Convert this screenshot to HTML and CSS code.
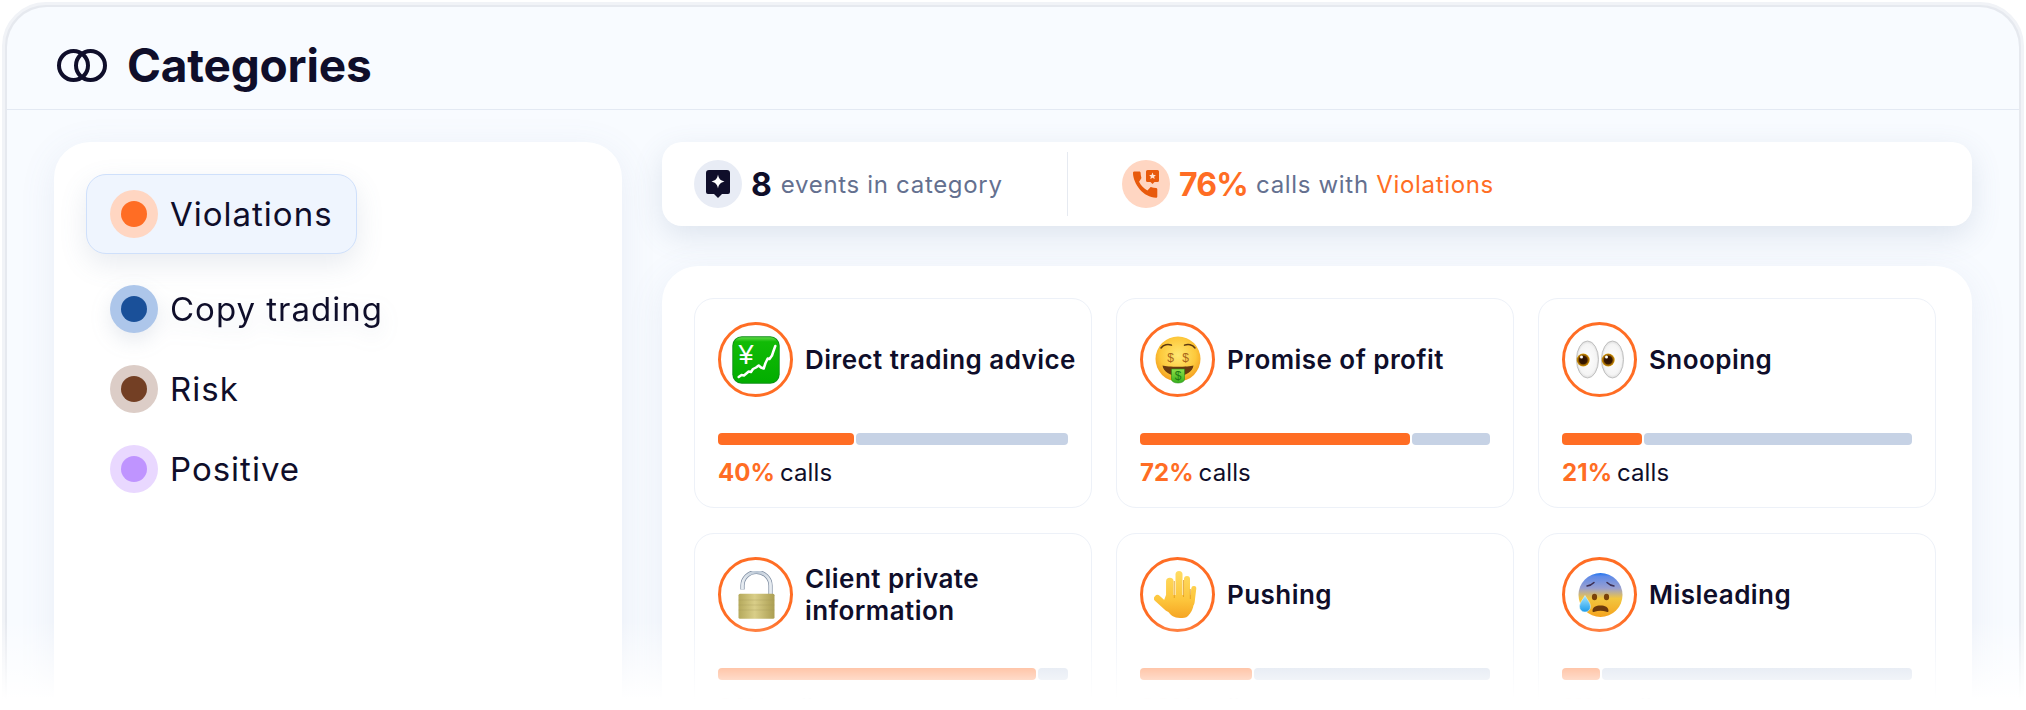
FILE: index.html
```html
<!DOCTYPE html>
<html lang="en">
<head>
<meta charset="utf-8">
<title>Categories</title>
<link rel="stylesheet" href="styles.css">
</head>
<body>
<div class="window">
  <header class="header">
    <svg class="rings" viewBox="0 0 50 33" width="50" height="33"><circle cx="16.5" cy="16.5" r="14.5"/><circle cx="33.5" cy="16.5" r="14.5"/></svg>
    <h1 class="title">Categories</h1>
  </header>
  <main class="content">
    <aside class="sidebar">
      <div class="cat cat-active"><span class="dot dot-orange"><i></i></span>Violations</div>
      <div class="cat cat-hover"><span class="dot dot-blue"><i></i></span>Copy trading</div>
      <div class="cat"><span class="dot dot-brown"><i></i></span>Risk</div>
      <div class="cat"><span class="dot dot-purple"><i></i></span>Positive</div>
    </aside>
    <section class="detail">
      <div class="stats">
        <div class="stat stat-first">
          <span class="stat-icon stat-icon-dark">
            <svg viewBox="0 0 24 28" width="24" height="28"><path fill="#0f0e2a" d="M3 0h18a3 3 0 0 1 3 3v19a2 2 0 0 1-2 2h-6l-4 4-4-4H2a2 2 0 0 1-2-2V3a3 3 0 0 1 3-3z"/><path fill="#fff" d="M12 4.5c.7 4 2.5 6 6.5 7-4 1-5.800 3-6.500 7-.7-4-2.500-6-6.500-7 4-1 5.800-3 6.500-7z"/></svg>
          </span>
          <b class="stat-num">8</b><span class="stat-text">events in category</span>
        </div>
        <div class="stat-divider"></div>
        <div class="stat stat-second">
          <span class="stat-icon stat-icon-orange">
            <svg viewBox="0 0 26 28" width="26" height="28"><path fill="#e85a0c" d="M6.100 11.800c1.800 3.700 4.700 6.700 8.300 8.600l2.800-2.900c.35-.35.85-.47 1.300-.31 1.400.48 2.900.74 4.500.74.7 0 1.300.58 1.300 1.300v7.200c0 .7-.6 1.300-1.300 1.300C10.800 27.700 0 14 0 2.800 0 2.100.6 1.500 1.300 1.500h5c.7 0 1.300.6 1.300 1.300 0 1.600.25 3.100.72 4.600.14.450.04.960-.32 1.320z"/><path fill="#e85a0c" d="M14.500 0h10a1.500 1.500 0 0 1 1.500 1.500v9a1.500 1.500 0 0 1-1.500 1.500h-3l-2 2-2-2h-3a1.500 1.500 0 0 1-1.500-1.500v-9A1.500 1.500 0 0 1 14.500 0z"/><path fill="#ffe3d4" d="M19.500 2.600l1 2.300 2.400.2-1.800 1.600.6 2.400-2.200-1.300-2.200 1.300.6-2.400-1.800-1.600 2.400-.2z"/></svg>
          </span>
          <b class="stat-num stat-num-orange">76%</b><span class="stat-text">calls with <em class="stat-accent">Violations</em></span>
        </div>
      </div>
      <div class="panel">
        <article class="card">
          <div class="card-head">
            <span class="emoji">
              <svg viewBox="0 0 48 48" width="48" height="48">
                <defs><linearGradient id="g1" x1="0" y1="0" x2="0" y2="1"><stop offset="0" stop-color="#5ed846"/><stop offset=".1" stop-color="#12bb06"/><stop offset="1" stop-color="#02ad00"/></linearGradient></defs>
                <rect x=".3" y=".3" width="47.400" height="47.400" rx="9.500" fill="#0b8f14"/>
                <rect x="1.200" y="1.200" width="45.600" height="45.600" rx="8.500" fill="url(#g1)"/>
                <text x="14" y="27.500" text-anchor="middle" class="emoji-yen">¥</text>
                <polyline points="6.700,41 9.500,39 12,39.500 16.700,35.500 19,36 21,33 24,31.500 26.700,29.500 29,31.500 31.700,32.500 33.500,27 35.700,22.500 37.500,23 40,19.500 41.500,15 43.300,10" fill="none" stroke="#fff" stroke-width="2.500" stroke-linejoin="round" stroke-linecap="round"/>
              </svg>
            </span>
            <h2 class="card-title">Direct trading advice</h2>
          </div>
          <div class="bar"><span class="fill fill-40"></span><span class="rest"></span></div>
          <p class="label"><b>40%</b> calls</p>
        </article>
        <article class="card">
          <div class="card-head">
            <span class="emoji">
              <svg viewBox="0 0 48 48" width="48" height="48">
                <defs>
                  <radialGradient id="g2" cx=".5" cy=".42" r=".6"><stop offset="0" stop-color="#ffe873"/><stop offset=".65" stop-color="#fdc93c"/><stop offset="1" stop-color="#f39a1c"/></radialGradient>
                  <linearGradient id="g2b" x1="0" y1="0" x2="0" y2="1"><stop offset="0" stop-color="#8ee04a"/><stop offset="1" stop-color="#35b01c"/></linearGradient>
                </defs>
                <circle cx="24" cy="23" r="22.500" fill="url(#g2)"/>
                <path d="M7 12c2.500-3.500 7-4.500 10.500-2.800M30.500 9.200C34 7.500 38.500 8.500 41 12" fill="none" stroke="#5d3a12" stroke-width="1.500" stroke-linecap="round"/>
                <text x="16.500" y="26" text-anchor="middle" class="emoji-dollar">$</text>
                <text x="31.500" y="26" text-anchor="middle" class="emoji-dollar">$</text>
                <path d="M8.500 29.500c5 1.700 26 1.700 31 0-.8 6-8 10.500-15.500 10.500S9.300 35.500 8.500 29.500z" fill="#6a3a10"/>
                <path d="M17.500 33h13v10.500a6.500 3.500 0 0 1-13 0z" fill="url(#g2b)" stroke="#2c8f18" stroke-width=".6"/>
                <text x="24" y="43.500" text-anchor="middle" class="emoji-dollar emoji-dollar-green">$</text>
              </svg>
            </span>
            <h2 class="card-title">Promise of profit</h2>
          </div>
          <div class="bar"><span class="fill fill-72"></span><span class="rest"></span></div>
          <p class="label"><b>72%</b> calls</p>
        </article>
        <article class="card">
          <div class="card-head">
            <span class="emoji">
              <svg viewBox="0 0 48 48" width="48" height="48">
                <defs>
                  <radialGradient id="g3" cx=".5" cy=".5" r=".55"><stop offset="0" stop-color="#fff"/><stop offset=".75" stop-color="#f4f4f4"/><stop offset="1" stop-color="#cfcfcf"/></radialGradient>
                  <radialGradient id="g3b" cx=".5" cy=".5" r=".5"><stop offset="0" stop-color="#2a1000"/><stop offset=".6" stop-color="#3b1a00"/><stop offset=".72" stop-color="#8a5500"/><stop offset="1" stop-color="#d99c0a"/></radialGradient>
                </defs>
                <ellipse cx="11.500" cy="23.500" rx="11" ry="18.500" fill="url(#g3)" stroke="#b5b5b5" stroke-width=".8"/>
                <ellipse cx="36.500" cy="23.500" rx="11" ry="18.500" fill="url(#g3)" stroke="#b5b5b5" stroke-width=".8"/>
                <circle cx="7.200" cy="24" r="6.500" fill="url(#g3b)"/>
                <circle cx="32.200" cy="24" r="6.500" fill="url(#g3b)"/>
                <circle cx="5.500" cy="21" r="1.500" fill="#fff"/>
                <circle cx="30.500" cy="21" r="1.500" fill="#fff"/>
              </svg>
            </span>
            <h2 class="card-title">Snooping</h2>
          </div>
          <div class="bar"><span class="fill fill-21"></span><span class="rest"></span></div>
          <p class="label"><b>21%</b> calls</p>
        </article>
        <article class="card">
          <div class="card-head">
            <span class="emoji">
              <svg viewBox="0 0 48 48" width="48" height="48">
                <defs>
                  <linearGradient id="g4" x1="0" y1="0" x2="1" y2="0"><stop offset="0" stop-color="#b5a95c"/><stop offset=".45" stop-color="#d9ce88"/><stop offset="1" stop-color="#ab9e52"/></linearGradient>
                  <linearGradient id="g4b" gradientUnits="userSpaceOnUse" x1="8" y1="0" x2="42" y2="0"><stop offset="0" stop-color="#eef2f6"/><stop offset=".5" stop-color="#b9c6d4"/><stop offset="1" stop-color="#f2f5f8"/></linearGradient>
                </defs>
                <path d="M10.500 18.500V14.500a14 13.500 0 0 1 28 0V24" fill="none" stroke="#7c8ba0" stroke-width="4.200"/>
                <path d="M10.500 18.500V14.500a14 13.500 0 0 1 28 0V24" fill="none" stroke="url(#g4b)" stroke-width="2.800"/>
                <rect x="6.500" y="22.700" width="36" height="25" rx="1.500" fill="url(#g4)"/>
                <path d="M6.500 29h36M6.500 34h36M6.500 39h36" stroke="#a3965a" stroke-width=".5" opacity=".6"/>
              </svg>
            </span>
            <h2 class="card-title">Client private<br>information</h2>
          </div>
          <div class="bar"><span class="fill fill-91"></span><span class="rest"></span></div>
          <p class="label"><b>91%</b> calls</p>
        </article>
        <article class="card">
          <div class="card-head">
            <span class="emoji">
              <svg viewBox="0 0 48 48" width="48" height="48">
                <defs><linearGradient id="g5" gradientUnits="userSpaceOnUse" x1="0" y1="0" x2="0" y2="48"><stop offset="0" stop-color="#ffdc62"/><stop offset=".6" stop-color="#fdc63c"/><stop offset="1" stop-color="#f5a322"/></linearGradient></defs>
                <g fill="none" stroke="url(#g5)" stroke-linecap="round">
                  <path d="M15.800 10.500V30" stroke-width="7.500"/>
                  <path d="M25 3.500V30" stroke-width="7"/>
                  <path d="M33 8V30" stroke-width="6"/>
                  <path d="M39.800 17.500L38 32" stroke-width="5"/>
                  <path d="M3.500 27.500L14 37" stroke-width="7"/>
                </g>
                <path d="M12 24h29l-1 8c-1 6-3 10-6 13-2 2-5 2-8 2-6 0-10-3-13-8l-4-7z" fill="url(#g5)"/>
                <path d="M20.300 10v17M29.500 9v17M36.300 18v10" stroke="#e09a20" stroke-width=".8" fill="none"/>
              </svg>
            </span>
            <h2 class="card-title">Pushing</h2>
          </div>
          <div class="bar"><span class="fill fill-32"></span><span class="rest"></span></div>
          <p class="label"><b>32%</b> calls</p>
        </article>
        <article class="card">
          <div class="card-head">
            <span class="emoji">
              <svg viewBox="0 0 48 48" width="48" height="48">
                <defs>
                  <linearGradient id="g6" x1="0" y1="0" x2="0" y2="1"><stop offset="0" stop-color="#1f74ee"/><stop offset=".08" stop-color="#5f8ae8"/><stop offset=".35" stop-color="#9aa0cf"/><stop offset=".58" stop-color="#f2c63e"/><stop offset="1" stop-color="#f5a41f"/></linearGradient>
                  <linearGradient id="g6b" x1="0" y1="0" x2="0" y2="1"><stop offset="0" stop-color="#a5e6ff"/><stop offset="1" stop-color="#1c9bea"/></linearGradient>
                </defs>
                <circle cx="24.500" cy="24" r="22" fill="url(#g6)"/>
                <path d="M11 15c2.500-.3 5-1.500 7-3.500M31 11.500c2 2 4.500 3.200 7 3.500" fill="none" stroke="#3d2f52" stroke-width="1.500" stroke-linecap="round"/>
                <ellipse cx="18.500" cy="26" rx="2.600" ry="3.200" fill="#7a4208"/>
                <ellipse cx="30.500" cy="26" rx="2.600" ry="3.200" fill="#7a4208"/>
                <path d="M16.500 40c0-4 3.500-5.500 8-5.500s8 1.500 8 5.500c0 1-1 1.200-2 .8-4-1.300-8-1.300-12 0-1 .4-2 .2-2-.8z" fill="#6c3a0c"/>
                <path d="M9 24.500c2.500 4.500 5.500 7.500 5.500 11a5.500 5.500 0 0 1-11 0c0-3.500 3-6.500 5.500-11z" fill="url(#g6b)" stroke="#e8f8ff" stroke-width=".5"/>
              </svg>
            </span>
            <h2 class="card-title">Misleading</h2>
          </div>
          <div class="bar"><span class="fill fill-11"></span><span class="rest"></span></div>
          <p class="label"><b>11%</b> calls</p>
        </article>
      </div>
    </section>
  </main>
</div>
<div class="fade"></div>
</body>
</html>
```
FILE: styles.css
```css
* { box-sizing: border-box; }
html, body { margin: 0; height: 710px; overflow: hidden; background: #fff; }
body { font-family: Inter, "Liberation Sans", sans-serif; color: #0f0e2a; position: relative; }

.window {
  margin: 2px 2px 0;
  height: 900px;
  border: 3px solid #f1f3f7;
  border-radius: 44px 44px 0 0;
  background: #e6e9ef;
  padding: 2px 2px 0;
}
.header {
  height: 103px;
  display: flex;
  align-items: center;
  gap: 20px;
  padding: 14px 0 0 50px;
  background: #f8fbff;
  border-bottom: 1px solid #e3e9f3;
  border-radius: 40px 40px 0 0;
}
.rings { fill: none; stroke: #0f0e2a; stroke-width: 4; flex: none; }
.title { margin: 0; font-size: 46px; font-weight: 700; letter-spacing: -.2px; }

.content {
  display: flex;
  gap: 40px;
  padding: 32px 47px 0;
  background: #f8fbff;
  height: 800px;
}
.sidebar {
  width: 568px;
  flex: none;
  background: #fff;
  border-radius: 36px;
  padding: 32px;
  box-shadow: 0 8px 36px rgba(100, 120, 170, .1);
  display: flex;
  flex-direction: column;
  gap: 16px;
}
.cat {
  display: flex;
  align-items: center;
  height: 64px;
  gap: 12px;
  padding: 0 24px;
  font-size: 33px;
  letter-spacing: 1px;
  align-self: flex-start;
}
.cat-active {
  height: 80px;
  margin-bottom: 7px;
  background: #eff5fe;
  border: 1px solid #cfe0fb;
  border-radius: 20px;
  padding: 0 23px;
  box-shadow: 0 10px 28px rgba(90, 110, 150, .14);
}
.cat-hover { filter: drop-shadow(0 8px 10px rgba(90, 110, 150, .14)); }
.dot { width: 48px; height: 48px; border-radius: 50%; display: flex; align-items: center; justify-content: center; flex: none; }
.dot i { width: 26px; height: 26px; border-radius: 50%; display: block; }
.dot-orange { background: #ffd6c2; }
.dot-orange i { background: #ff6d24; }
.dot-blue { background: #adc6ea; }
.dot-blue i { background: #1a5099; }
.dot-brown { background: #dccdc7; }
.dot-brown i { background: #733f24; }
.dot-purple { background: #e9d8ff; }
.dot-purple i { background: #bf94ff; }

.detail { width: 1310px; flex: none; display: flex; flex-direction: column; gap: 40px; }
.stats {
  height: 84px;
  flex: none;
  background: #fff;
  border-radius: 20px;
  box-shadow: 0 10px 30px rgba(90, 110, 150, .16);
  display: flex;
  align-items: center;
  padding-left: 32px;
}
.stat { display: flex; align-items: center; }
.stat-first { width: 373px; }
.stat-second { margin-left: 54px; }
.stat-divider { width: 1px; height: 64px; background: #e6eaf1; }
.stat-icon { width: 48px; height: 48px; border-radius: 50%; display: flex; align-items: center; justify-content: center; flex: none; margin-right: 9px; }
.stat-icon-dark { background: #e8ecf5; }
.stat-icon-orange { background: #ffd6c2; }
.stat-num { font-size: 32px; font-weight: 700; margin-right: 9px; }
.stat-num-orange { color: #ff6d24; margin-right: 8px; letter-spacing: -.8px; }
.stat-text { font-size: 24px; color: #64708f; letter-spacing: .68px; }
.stat-accent { font-style: normal; color: #ff6d24; }

.panel {
  background: #fff;
  border-radius: 36px;
  box-shadow: 0 8px 36px rgba(100, 120, 170, .1);
  padding: 32px 36px 32px 32px;
  display: grid;
  grid-template-columns: repeat(3, 398px);
  column-gap: 24px;
  row-gap: 25px;
  align-content: start;
  flex: 1;
}
.card {
  height: 210px;
  border: 1px solid #edf1f8;
  border-radius: 20px;
  padding: 23px;
}
.card-head { display: flex; align-items: center; gap: 12px; height: 75px; }
.emoji {
  width: 75px;
  height: 75px;
  border: 3px solid #ff6d24;
  border-radius: 50%;
  display: flex;
  align-items: center;
  justify-content: center;
  flex: none;
}
.emoji svg { display: block; flex: none; }
.emoji-yen { font-family: "Liberation Sans", sans-serif; font-size: 27px; fill: #fff; }
.emoji-dollar { font-family: "Liberation Sans", sans-serif; font-size: 12px; fill: #a8651a; }
.emoji-dollar-green { fill: #1f7a12; }
.card-title { margin: 0; font-size: 26px; font-weight: 600; line-height: 32px; letter-spacing: .45px; white-space: nowrap; }
.bar { display: flex; gap: 2px; height: 12px; margin-top: 36px; }
.fill { background: #ff6d24; border-radius: 4px; height: 100%; flex: none; }
.rest { background: #c6d2e5; border-radius: 4px; height: 100%; flex: 1; }
.fill-40 { width: 136px; }
.fill-72 { width: 270px; }
.fill-21 { width: 80px; }
.fill-91 { width: 318px; }
.fill-32 { width: 112px; }
.fill-11 { width: 38px; }
.label { margin: 12px 0 0; font-size: 24px; line-height: 31px; font-weight: 400; letter-spacing: .1px; }
.label b { color: #ff6d24; font-weight: 700; margin-right: -2px; }

.fade {
  position: absolute;
  left: 0;
  right: 0;
  top: 620px;
  height: 90px;
  background: linear-gradient(to bottom, rgba(255, 255, 255, 0) 0, #fff 88%);
}
```
